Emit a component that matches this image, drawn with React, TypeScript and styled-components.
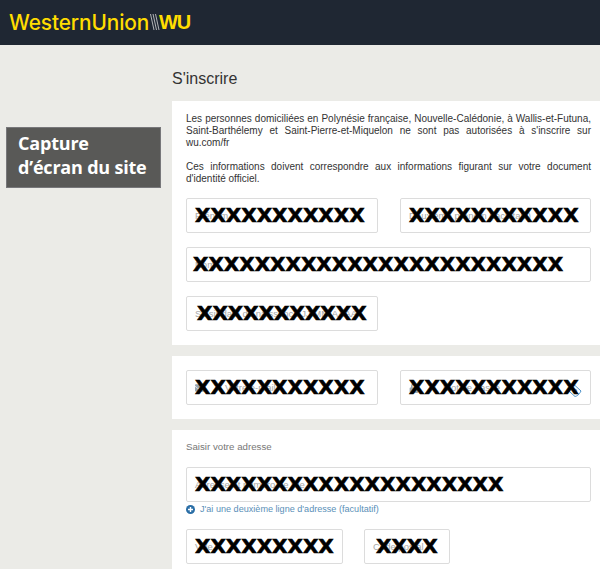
import React from "react";
import styled, { createGlobalStyle } from "styled-components";
import { FaEnvelope, FaLock } from "react-icons/fa";

const GlobalStyle = createGlobalStyle`
  html, body {
    margin: 0;
    padding: 0;
    background: #ebebe7;
    font-family: "Liberation Sans", Arial, sans-serif;
  }
`;

const Field: React.FC<{
  width?: string;
  placeholder: string;
  count: number;
  left: number;
  indent?: number;
  children?: React.ReactNode;
}> = ({ width, placeholder, count, left, indent, children }) => (
  <InputBox $width={width}>
    {children}
    <Placeholder $indent={indent}>{placeholder}</Placeholder>
    <Mask $left={left}>{"X".repeat(count)}</Mask>
  </InputBox>
);

const App: React.FC = () => {
  return (
    <Page>
      <GlobalStyle />
      <Header>
        <Logo>
          <LogoWord>WesternUnion</LogoWord>
          <LogoLines width="11" height="16" viewBox="0 0 11 16" fill="none" stroke="#d8d8d8" strokeWidth="0.8">
            <path d="M0.5 0 L4 16 M3 0 L6.5 16 M5.5 0 L9 16" />
          </LogoLines>
          <LogoMark>WU</LogoMark>
        </Logo>
      </Header>

      <Body>
        <Side>
          <Banner>
            Capture
            <br />
            d’écran du site
          </Banner>
        </Side>

        <Main>
          <Title>S'inscrire</Title>

          <FirstPanel>
            <Notice>
              Les personnes domiciliées en Polynésie française, Nouvelle-Calédonie, à Wallis-et-Futuna,
              Saint-Barthélemy et Saint-Pierre-et-Miquelon ne sont pas autorisées à s'inscrire sur wu.com/fr
            </Notice>
            <LastNotice>
              Ces informations doivent correspondre aux informations figurant sur votre document
              d'identité officiel.
            </LastNotice>
            <Row>
              <Field width="192px" placeholder="Prénom" count={11} left={9} />
              <Field width="191px" placeholder="Deuxième prénom (facultatif)" count={11} left={9} />
            </Row>
            <Row>
              <Field placeholder="Nom" count={24} left={7} />
            </Row>
            <Row>
              <Field width="192px" placeholder="Saisir date de naissance JJ/MM/AAAA" count={11} left={11} />
            </Row>
          </FirstPanel>

          <SecondPanel>
            <Row>
              <Field width="192px" placeholder="Votre e-mail" count={11} left={9} indent={20}>
                <FaEnvelope size={10} color="#9aa7b3" />
              </Field>
              <Field width="191px" placeholder="Mot de passe" count={11} left={9} indent={24}>
                <FaLock size={10} color="#9aa7b3" />
                <EyeIcon width="14" height="14" viewBox="0 0 14 14" fill="none" stroke="#4a90c8" strokeWidth="1">
                  <path d="M1 7 C3 3 5 2 7 1.5 L13 7 C11 11 9 12 7 12.5 Z" />
                  <circle cx="7" cy="7" r="1.8" />
                </EyeIcon>
              </Field>
            </Row>
          </SecondPanel>

          <ThirdPanel>
            <SectionLabel>Saisir votre adresse</SectionLabel>
            <Field placeholder="Adresse et numéro de rue" count={20} left={9} />
            <AddLine>
              <svg width="9" height="9" viewBox="0 0 9 9">
                <circle cx="4.5" cy="4.5" r="4.5" fill="#2a6ea6" />
                <path d="M4.5 2 V7 M2 4.5 H7" stroke="#ffffff" strokeWidth="1.4" />
              </svg>
              J'ai une deuxième ligne d'adresse (facultatif)
            </AddLine>
            <ShortRow>
              <Field width="157px" placeholder="Ville" count={9} left={9} />
              <Field width="86px" placeholder="Code postal" count={4} left={12} />
            </ShortRow>
          </ThirdPanel>
        </Main>
      </Body>
    </Page>
  );
};

const Page = styled.div`
  width: 600px;
  height: 569px;
  overflow: hidden;
  background: #ebebe7;
`;

const Header = styled.header`
  height: 45px;
  background: #1f2733;
  display: flex;
  align-items: center;
  padding-left: 9px;
`;

const Logo = styled.div`
  display: flex;
  align-items: center;
  color: #ffdd00;
  margin-top: -1px;
`;

const LogoWord = styled.span`
  font-family: Inter, sans-serif;
  font-size: 20.8px;
  font-weight: 500;
  letter-spacing: -0.1px;
  width: 141px;
  white-space: nowrap;
`;

const LogoLines = styled.svg`
  flex-shrink: 0;
  margin-right: -2px;
`;

const LogoMark = styled.span`
  font-family: "Liberation Sans", sans-serif;
  font-size: 20px;
  font-weight: 700;
  letter-spacing: -1.2px;
`;

const Body = styled.div`
  display: flex;
`;

const Side = styled.aside`
  width: 172px;
  flex-shrink: 0;
  padding: 82px 11px 0 6px;
  box-sizing: border-box;
`;

const Banner = styled.div`
  height: 61px;
  box-sizing: border-box;
  background: #595957;
  border: 1px solid #77777a;
  color: #ffffff;
  font-family: "Open Sans", sans-serif;
  font-size: 18px;
  font-weight: 700;
  line-height: 24px;
  padding: 3px 0 0 11px;
  letter-spacing: -0.2px;
`;

const Main = styled.main`
  flex: 1;
  min-width: 0;
`;

const Title = styled.h1`
  margin: 0;
  height: 56px;
  box-sizing: border-box;
  padding-top: 25px;
  font-size: 16px;
  line-height: 18px;
  font-weight: 400;
  color: #333333;
`;

const Panel = styled.section`
  background: #ffffff;
  padding: 0 9px 0 14px;
  display: flex;
  flex-direction: column;
`;

const FirstPanel = styled(Panel)`
  height: 244px;
  box-sizing: border-box;
  padding-top: 12px;
  margin-bottom: 11px;
`;

const SecondPanel = styled(Panel)`
  height: 63px;
  box-sizing: border-box;
  padding-top: 14px;
  margin-bottom: 11px;
`;

const ThirdPanel = styled(Panel)`
  height: 139px;
  box-sizing: border-box;
  padding-top: 11px;
`;

const Notice = styled.p`
  margin: 0 0 12px;
  font-size: 10px;
  line-height: 12px;
  color: #333333;
  text-align: justify;
`;

const LastNotice = styled(Notice)`
  margin-bottom: 13px;
`;

const Row = styled.div`
  display: flex;
  justify-content: space-between;
  margin-bottom: 14px;

  &:last-child {
    margin-bottom: 0;
  }
`;

const ShortRow = styled(Row)`
  justify-content: flex-start;
  gap: 21px;
`;

const InputBox = styled.div<{ $width?: string }>`
  position: relative;
  width: ${(p) => p.$width || "100%"};
  height: 35px;
  box-sizing: border-box;
  border: 1px solid #dcdcdc;
  border-radius: 2px;
  background: #ffffff;
  display: flex;
  align-items: center;
  padding-left: 8px;
`;

const Placeholder = styled.span<{ $indent?: number }>`
  font-size: 9.5px;
  color: #a9a9a9;
  white-space: nowrap;
  margin-left: ${(p) => p.$indent || 0}px;
`;

const Mask = styled.span<{ $left: number }>`
  position: absolute;
  left: ${(p) => p.$left - 1}px;
  top: 0;
  line-height: 33px;
  font-family: "DejaVu Sans", sans-serif;
  font-size: 20px;
  font-weight: 700;
  color: #000000;
  white-space: nowrap;
  -webkit-text-stroke: 0.6px #000000;
`;

const EyeIcon = styled.svg`
  position: absolute;
  right: 8px;
  top: 13px;
`;

const SectionLabel = styled.div`
  font-size: 9.7px;
  line-height: 12px;
  color: #777777;
  margin-bottom: 14px;
`;

const AddLine = styled.div`
  display: flex;
  align-items: center;
  gap: 5px;
  height: 12px;
  margin: 1px 0 14px;
  font-size: 9.1px;
  color: #5a8fb8;
`;

export default App;
